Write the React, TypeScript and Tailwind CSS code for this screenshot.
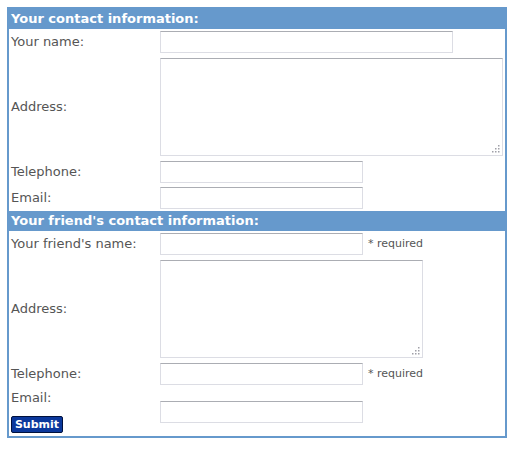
import React from "react";

const field =
  "block h-[22px] border border-[#dcdde4] border-t-[#abadb3] bg-white outline-none";

function Grip() {
  // dotted resize corner drawn in the old textareas
  return (
    <svg
      className="absolute right-[3px] bottom-[3px]"
      width="8"
      height="8"
      viewBox="0 0 8 8"
    >
      {[
        [6, 0],
        [3, 3],
        [6, 3],
        [0, 6],
        [3, 6],
        [6, 6],
      ].map(([x, y]) => (
        <rect key={`${x}-${y}`} x={x} y={y} width="1.5" height="1.5" fill="#a0a0a8" />
      ))}
    </svg>
  );
}

function Area({ width }: { width: string }) {
  return (
    <div className={`relative ${width}`}>
      <textarea className="block h-[98px] w-full resize-none border border-[#dcdde4] border-t-[#abadb3] bg-white outline-none" />
      <Grip />
    </div>
  );
}

function Header({ title }: { title: string }) {
  return (
    <div className="h-[20px] bg-[#6699cc] pl-[2px] text-[13px] font-bold leading-[20px] text-white">
      {title}
    </div>
  );
}

function Row({
  label,
  children,
  className = "",
}: {
  label: string;
  children: React.ReactNode;
  className?: string;
}) {
  return (
    <div className={`flex items-center py-[2px] ${className}`}>
      <div className="w-[151px] pl-[2px]">{label}</div>
      <div className="flex items-center">{children}</div>
    </div>
  );
}

function Required() {
  return <span className="ml-[5px] text-[11px] text-[#555]">* required</span>;
}

export default function App() {
  return (
    <div className="bg-white p-[7px] font-['DejaVu_Sans',Verdana,sans-serif] text-[13px] leading-[16px] text-[#555]">
      <form className="w-[500px] border-2 border-[#6699cc]">
        <Header title="Your contact information:" />
        <Row label="Your name:">
          <input className={`${field} w-[293px]`} />
        </Row>
        <Row label="Address:" className="mt-px">
          <Area width="w-[343px]" />
        </Row>
        <Row label="Telephone:" className="mt-px">
          <input className={`${field} w-[203px]`} />
        </Row>
        <Row label="Email:">
          <input className={`${field} w-[203px]`} />
        </Row>

        <Header title="Your friend's contact information:" />
        <Row label="Your friend's name:">
          <input className={`${field} w-[203px]`} />
          <Required />
        </Row>
        <Row label="Address:" className="mt-px">
          <Area width="w-[263px]" />
        </Row>
        <Row label="Telephone:" className="mt-px">
          <input className={`${field} w-[203px]`} />
          <Required />
        </Row>
        <div className="flex pb-[3px]">
          <div className="w-[151px] pl-[2px] pt-[3px]">
            <div>Email:</div>
            <button
              type="button"
              className="mt-[10px] h-[17px] w-[52px] rounded-[2px] border border-[#00113d] bg-[#0b389c] text-[11px] leading-[14px] font-bold text-white"
            >
              Submit
            </button>
          </div>
          <div className="pt-[14px]">
            <input className={`${field} w-[203px]`} />
          </div>
        </div>
      </form>
    </div>
  );
}
